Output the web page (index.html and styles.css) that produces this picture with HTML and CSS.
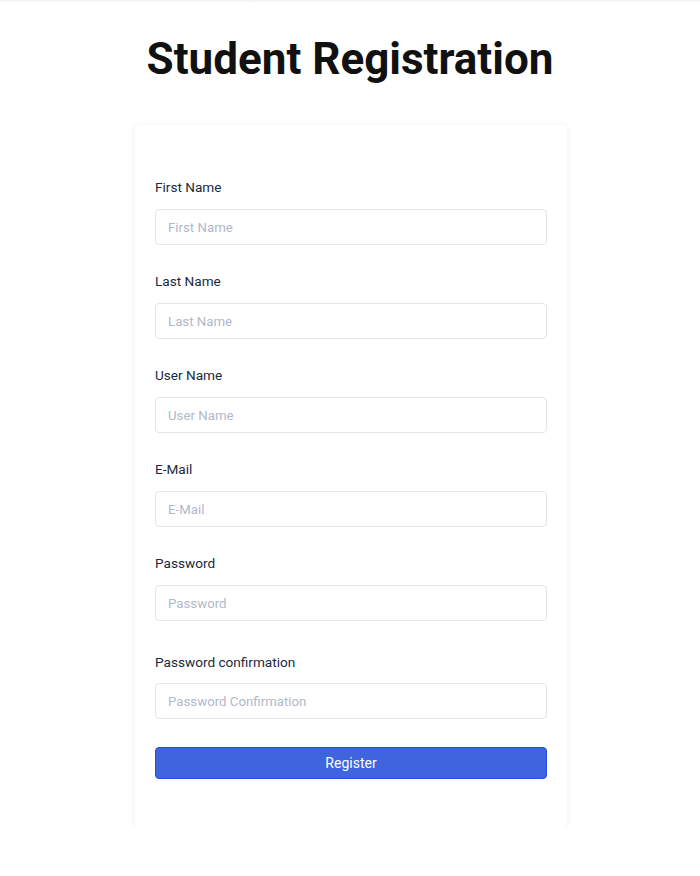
FILE: index.html
```html
<!DOCTYPE html>
<html lang="en">
<head>
  <meta charset="UTF-8">
  <meta name="viewport" content="width=device-width, initial-scale=1">
  <title>Student Registration</title>
  <link rel="stylesheet" href="styles.css">
</head>
<body>
  <div class="top-bar"></div>

  <h1 class="page-title">Student Registration</h1>

  <form class="register-card" onsubmit="return false;">
    <div class="form-group">
      <label for="first-name">First Name</label>
      <input type="text" id="first-name" placeholder="First Name">
    </div>
    <div class="form-group">
      <label for="last-name">Last Name</label>
      <input type="text" id="last-name" placeholder="Last Name">
    </div>
    <div class="form-group">
      <label for="user-name">User Name</label>
      <input type="text" id="user-name" placeholder="User Name">
    </div>
    <div class="form-group">
      <label for="email">E-Mail</label>
      <input type="email" id="email" placeholder="E-Mail">
    </div>
    <div class="form-group">
      <label for="password">Password</label>
      <input type="password" id="password" placeholder="Password">
    </div>
    <div class="form-group confirm-group">
      <label for="password-confirm">Password confirmation</label>
      <input type="password" id="password-confirm" placeholder="Password Confirmation">
    </div>
    <button type="submit" class="register-btn">Register</button>
  </form>
</body>
</html>
```

FILE: styles.css
```css
* {
  margin: 0;
  padding: 0;
  box-sizing: border-box;
}
body {
  font-family: Roboto, 'Liberation Sans', sans-serif;
  background: #fff;
  color: #111;
}
.top-bar {
  height: 3px;
  background: linear-gradient(#f2f2f2, #fff);
}
.page-title {
  text-align: center;
  font-size: 44px;
  line-height: 52px;
  font-weight: 700;
  color: #111;
  margin: 30px 0 40px;
}
.register-card {
  width: 432px;
  margin: 0 auto;
  padding: 52px 20px 47px;
  background: #fff;
  border-radius: 5px;
  box-shadow: 0 1px 8px rgba(0, 0, 0, 0.07);
  position: relative;
  left: 1px;
}
.form-group {
  display: flex;
  flex-direction: column;
  margin-bottom: 26px;
}
.form-group label {
  font-size: 13.6px;
  line-height: 20px;
  color: #1a2a3e;
  margin-bottom: 12px;
}
.form-group input {
  height: 36px;
  padding: 0 12px;
  font-family: inherit;
  font-size: 13.25px;
  color: #333;
  border: 1px solid #e3e5ea;
  border-radius: 4px;
  background: #fff;
}
.form-group input::placeholder {
  color: #b2b8ca;
}
.form-group input:focus {
  outline: none;
  border-color: #3e64de;
}
.confirm-group {
  padding-top: 5px;
  margin-bottom: 28px;
}
.confirm-group label {
  margin-bottom: 11px;
}
.register-btn {
  display: block;
  width: 100%;
  height: 32px;
  font-family: inherit;
  font-size: 14px;
  color: #fff;
  background: #3e64de;
  border: 1px solid #1f4fdc;
  border-radius: 4px;
  cursor: pointer;
}
```
